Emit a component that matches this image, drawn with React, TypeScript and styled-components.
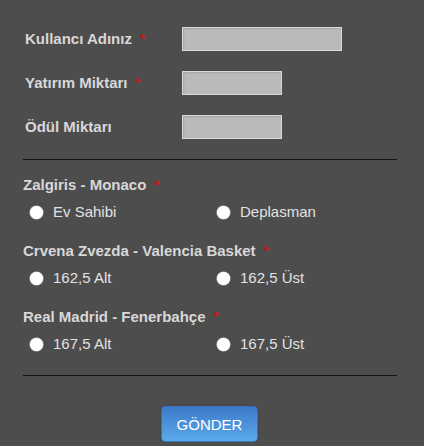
import { createGlobalStyle } from "styled-components";
import styled from "styled-components";

const GlobalStyle = createGlobalStyle`
  html, body {
    margin: 0;
    padding: 0;
    background: #4d4d4d;
  }
  body {
    font-family: "Liberation Sans", Arial, sans-serif;
  }
`;

const Form = styled.form`
  width: 374px;
  padding: 27px 0 0 23px;
  display: flex;
  flex-direction: column;
`;

const FieldRow = styled.div`
  display: grid;
  grid-template-columns: 157px 1fr;
  align-items: center;
  padding-left: 2px;
  margin-bottom: 20px;
`;

const Label = styled.label`
  font-size: 15px;
  font-weight: bold;
  color: #d8d8d8;
  line-height: 18px;
`;

const Required = styled.span`
  color: #ff0000;
  font-size: 14px;
  line-height: 1;
  font-weight: normal;
  margin-left: 8px;
`;

const TextInput = styled.input<{ $wide?: boolean }>`
  box-sizing: border-box;
  width: ${(p) => (p.$wide ? "160px" : "100px")};
  height: 24px;
  margin: 0;
  border: 1px solid #d9d9d9;
  background: #bcbab8;
  box-shadow: inset 1px 1px 2px rgba(0, 0, 0, 0.12);
  outline: none;
`;

const Divider = styled.hr`
  width: 100%;
  height: 0;
  margin: 0;
  border: none;
  border-top: 1px solid #141414;
`;

const Group = styled.fieldset<{ $first?: boolean }>`
  border: none;
  margin: 0;
  padding: 0;
  margin-top: ${(p) => (p.$first ? "16px" : "21px")};
`;

const GroupTitle = styled.div`
  height: 18px;
  font-size: 15px;
  font-weight: bold;
  color: #d8d8d8;
  line-height: 18px;
`;

const Options = styled.div`
  display: grid;
  grid-template-columns: 1fr 1fr;
  margin-top: 9px;
`;

const Option = styled.label`
  display: flex;
  align-items: center;
  gap: 10px;
  height: 18px;
  padding-left: 7px;
  font-size: 15px;
  line-height: 18px;
  color: #e2e2e2;
`;

const Radio = styled.input`
  appearance: none;
  width: 13px;
  height: 13px;
  margin: 0;
  border-radius: 50%;
  background: #ffffff;
  box-shadow: 0 0 0 0.5px #d0d0d0;
`;

const BottomDivider = styled(Divider)`
  margin-top: 22px;
`;

const Actions = styled.div`
  display: flex;
  justify-content: center;
  padding: 30px 0 0;
`;

const SubmitButton = styled.button`
  width: 97px;
  height: 36px;
  margin-left: -1px;
  border: 1px solid #3a73bd;
  border-radius: 4px;
  background: linear-gradient(#3c79c9, #5aaae9);
  box-shadow: 0 1px 2px rgba(0, 0, 0, 0.35);
  color: #ffffff;
  font-family: "Liberation Sans", Arial, sans-serif;
  font-size: 15px;
  padding: 0;
`;

const matches = [
  { title: "Zalgiris - Monaco", name: "m1", options: ["Ev Sahibi", "Deplasman"] },
  { title: "Crvena Zvezda - Valencia Basket", name: "m2", options: ["162,5 Alt", "162,5 Üst"] },
  { title: "Real Madrid - Fenerbahçe", name: "m3", options: ["167,5 Alt", "167,5 Üst"] },
];

export default function App() {
  return (
    <>
      <GlobalStyle />
      <Form onSubmit={(e) => e.preventDefault()}>
        <FieldRow>
          <Label>
            Kullancı Adınız<Required>*</Required>
          </Label>
          <TextInput $wide />
        </FieldRow>
        <FieldRow>
          <Label>
            Yatırım Miktarı<Required>*</Required>
          </Label>
          <TextInput />
        </FieldRow>
        <FieldRow>
          <Label>Ödül Miktarı</Label>
          <TextInput />
        </FieldRow>
        <Divider />
        {matches.map((m, i) => (
          <Group key={m.name} $first={i === 0}>
            <GroupTitle>
              {m.title}
              <Required>*</Required>
            </GroupTitle>
            <Options>
              {m.options.map((o) => (
                <Option key={o}>
                  <Radio type="radio" name={m.name} />
                  {o}
                </Option>
              ))}
            </Options>
          </Group>
        ))}
        <BottomDivider />
        <Actions>
          <SubmitButton type="submit">GÖNDER</SubmitButton>
        </Actions>
      </Form>
    </>
  );
}
